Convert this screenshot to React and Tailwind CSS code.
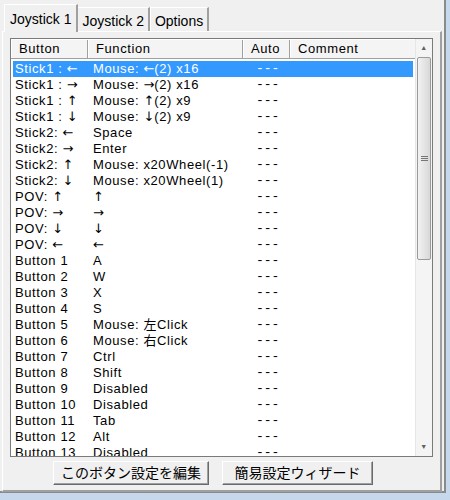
import React from "react";

const rows = [
  ["Stick1 : ←", "Mouse: ←(2) x16"],
  ["Stick1 : →", "Mouse: →(2) x16"],
  ["Stick1 : ↑", "Mouse: ↑(2) x9"],
  ["Stick1 : ↓", "Mouse: ↓(2) x9"],
  ["Stick2: ←", "Space"],
  ["Stick2: →", "Enter"],
  ["Stick2: ↑", "Mouse: x20Wheel(-1)"],
  ["Stick2: ↓", "Mouse: x20Wheel(1)"],
  ["POV: ↑", "↑"],
  ["POV: →", "→"],
  ["POV: ↓", "↓"],
  ["POV: ←", "←"],
  ["Button 1", "A"],
  ["Button 2", "W"],
  ["Button 3", "X"],
  ["Button 4", "S"],
  ["Button 5", "Mouse: 左Click"],
  ["Button 6", "Mouse: 右Click"],
  ["Button 7", "Ctrl"],
  ["Button 8", "Shift"],
  ["Button 9", "Disabled"],
  ["Button 10", "Disabled"],
  ["Button 11", "Tab"],
  ["Button 12", "Alt"],
  ["Button 13", "Disabled"],
];

const font = { fontFamily: '"Liberation Sans", "Noto Sans CJK JP", sans-serif' };

// arrows are wide glyphs in the original; DejaVu has wide ones that stay monochrome
const withArrows = (s) =>
  s.split(/([←→↑↓])/).map((part, i) =>
    /[←→↑↓]/.test(part) ? (
      <span key={i} className="font-['DejaVu_Sans'] tracking-normal leading-[16px]">
        {part + "\uFE0E"}
      </span>
    ) : (
      part
    )
  );

const Tab = ({ label, active }) => (
  <div
    className={
      active
        ? "relative z-10 -mb-px h-[28px] px-[5px] pt-[4px] bg-[#f0f0f0] border-l border-t border-white border-r-2 border-r-[#a0a0a0] text-[14px] -mr-[1px]"
        : "h-[24px] mt-[4px] px-[4px] pt-[3px] bg-[#f0f0f0] border-l border-t border-white border-r-2 border-r-[#a0a0a0] text-[14px]"
    }
  >
    {label}
  </div>
);

const HeaderCell = ({ label, w }) => (
  <div
    className={`${w} h-full flex items-center pl-[7px] border-r border-r-[#a0a0a0] border-l border-l-white shrink-0`}
  >
    {label}
  </div>
);

export default function App() {
  return (
    <div className="w-[450px] h-[500px] bg-[#c6d8ec]" style={font}>
      <div className="w-[446px] h-[493px] bg-[#f0f0f0] border-r-2 border-b-2 border-[#8a8a8a] flex flex-col">
        <div className="flex items-end pl-[4px] pt-[3px] h-[31px] text-black">
          <Tab label="Joystick 1" active />
          <Tab label="Joystick 2" />
          <Tab label="Options" />
        </div>
        <div className="mx-[2px] flex-1 border-l border-t border-white border-r-2 border-b-2 border-r-[#a0a0a0] border-b-[#a0a0a0] flex flex-col px-[7px] pt-[6px] pb-[5px]">
          <div className="h-[419px] border border-[#7a7a7a] bg-white flex flex-col text-[13px] leading-[16px] text-black tracking-[0.6px]">
            <div className="flex flex-1 min-h-0">
              <div className="flex-1 min-w-0 flex flex-col overflow-hidden">
                <div className="h-[20px] flex bg-[#f4f4f4] border-t border-t-white border-b border-[#a0a0a0] shrink-0">
                  <HeaderCell label="Button" w="w-[77px]" />
                  <HeaderCell label="Function" w="w-[155px]" />
                  <HeaderCell label="Auto" w="w-[47px]" />
                  <HeaderCell label="Comment" w="w-[127px]" />
                </div>
                <div className="flex flex-col pt-[2px] pl-[2px] pr-[2px]">
                  {rows.map(([b, f], i) => (
                    <div
                      key={i}
                      className={`flex h-[16px] shrink-0 items-center ${
                        i === 0 ? "bg-[#3399ff] text-white" : ""
                      }`}
                    >
                      <span className="w-[78px] h-[16px] pl-[2px] whitespace-nowrap overflow-hidden">{withArrows(b)}</span>
                      <span className="w-[155px] h-[16px] pl-[2px] whitespace-nowrap overflow-hidden">{withArrows(f)}</span>
                      <span className="w-[47px] h-[16px] pl-[10px] font-['Liberation_Mono'] tracking-normal">---</span>
                    </div>
                  ))}
                </div>
              </div>
              <div className="w-[17px] flex flex-col bg-[#f4f4f4] border-l border-[#e6e6e6]">
                <div className="h-[18px] flex items-center justify-center text-[#606060] text-[7px]">▲</div>
                <div className="h-[203px] mx-[1px] border border-[#9a9a9a] rounded-[2px] bg-gradient-to-r from-[#f2f2f2] to-[#d8d8d8] flex items-center justify-center">
                  <svg width="7" height="7" viewBox="0 0 7 7">
                    <path d="M0 1.5h7M0 3.5h7M0 5.5h7" stroke="#777" strokeWidth="1" />
                  </svg>
                </div>
                <div className="flex-1" />
                <div className="h-[18px] flex items-center justify-center text-[#606060] text-[7px]">▼</div>
              </div>
            </div>
          </div>
          <div className="flex gap-[13px] mt-[4px] pl-[43px]">
            <button className="w-[156px] h-[24px] bg-[#f0f0f0] border border-white border-r-[#6a6a6a] border-b-[#6a6a6a] shadow-[inset_-1px_-1px_0_#a0a0a0] text-[14px] text-black">
              このボタン設定を編集
            </button>
            <button className="w-[151px] h-[24px] bg-[#f0f0f0] border border-white border-r-[#6a6a6a] border-b-[#6a6a6a] shadow-[inset_-1px_-1px_0_#a0a0a0] text-[14px] text-black">
              簡易設定ウィザード
            </button>
          </div>
        </div>
      </div>
    </div>
  );
}
